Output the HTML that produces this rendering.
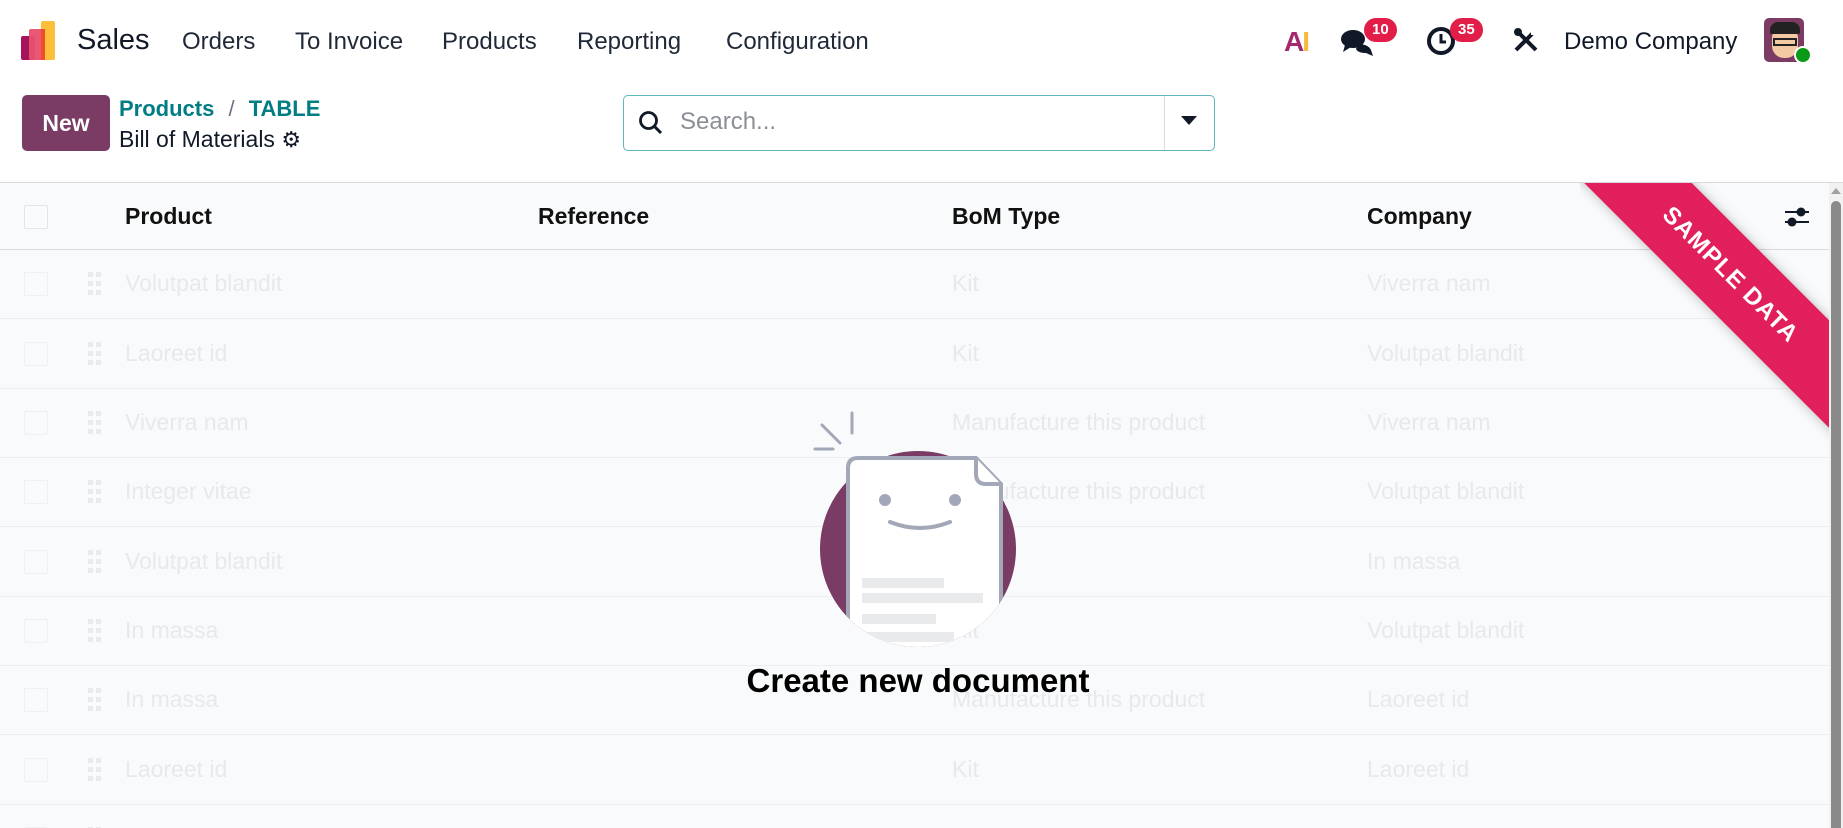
<!DOCTYPE html>
<html style="width:1843px;height:828px;overflow:hidden"><head><meta charset="utf-8">
<style>
*{box-sizing:border-box;margin:0;padding:0}
body{width:1843px;height:828px;overflow:hidden;background:#fff;font-family:"Liberation Sans","DejaVu Sans",sans-serif;color:#111827;position:relative}
.abs{position:absolute}
.nav{font-size:24px;color:#1f2937;top:28px;white-space:nowrap}
.badge{position:absolute;background:#e11d48;color:#fff;font-size:15px;font-weight:bold;border-radius:12px;padding:3px 8px;line-height:18px}
.th{position:absolute;top:203px;font-size:23px;font-weight:bold;color:#111}
.row{position:absolute;left:0;width:1829px;height:69px;border-bottom:1px solid #eceef1}
.cell{position:absolute;top:20px;font-size:23px;color:#e7e9ec;white-space:nowrap}
.cb{position:absolute;left:24px;top:22px;width:24px;height:24px;border:1px solid #eef0f2;border-radius:2px}
.dh{position:absolute;left:88px;top:22px;width:14px;height:24px;background:
linear-gradient(#e8eaed,#e8eaed) 0 0/5px 5px,linear-gradient(#e8eaed,#e8eaed) 8px 0/5px 5px,
linear-gradient(#e8eaed,#e8eaed) 0 9px/5px 5px,linear-gradient(#e8eaed,#e8eaed) 8px 9px/5px 5px,
linear-gradient(#e8eaed,#e8eaed) 0 18px/5px 5px,linear-gradient(#e8eaed,#e8eaed) 8px 18px/5px 5px;background-repeat:no-repeat}
</style></head><body>

<svg class="abs" style="left:21px;top:20px" width="42" height="42" viewBox="0 0 42 42">
<rect x="0" y="16" width="14" height="24" rx="2" fill="#a4135c"/>
<rect x="8" y="9" width="14" height="31" rx="2" fill="#e8506f" opacity=".95"/>
<rect x="20" y="1" width="14" height="39" rx="2" fill="#fbbf3c"/>
<rect x="20" y="9" width="4" height="31" fill="#f04c2b"/>
</svg>
<div class="abs nav" style="left:77px;top:24px;font-size:29px;color:#111827">Sales</div>
<div class="abs nav" style="left:182px">Orders</div>
<div class="abs nav" style="left:295px">To Invoice</div>
<div class="abs nav" style="left:442px">Products</div>
<div class="abs nav" style="left:577px">Reporting</div>
<div class="abs nav" style="left:726px">Configuration</div>

<div class="abs" style="left:1284px;top:26px;font-size:28px;font-weight:bold;letter-spacing:-2px"><span style="color:#a3286e">A</span><span style="color:#f6b93b">I</span></div>
<svg class="abs" style="left:1340px;top:28px" width="34" height="30" viewBox="0 0 34 30"><ellipse cx="13" cy="11" rx="12" ry="9" fill="#111827"/><path d="M5 17 L3 24 L11 19Z" fill="#111827"/><path d="M18 16 q10 0 13 6 l2 6 -7 -3 q-8 0 -10 -4" fill="#111827"/></svg>
<div class="badge" style="left:1364px;top:18px">10</div>
<svg class="abs" style="left:1426px;top:25px" width="32" height="32" viewBox="0 0 32 32"><circle cx="15" cy="16" r="12" fill="none" stroke="#111827" stroke-width="4"/><path d="M15 9v8h5" stroke="#111827" stroke-width="3" fill="none"/></svg>
<div class="badge" style="left:1450px;top:18px">35</div>
<svg class="abs" style="left:1512px;top:26px" width="28" height="28" viewBox="0 0 28 28"><path d="M4 4 L24 24" stroke="#111827" stroke-width="4"/><path d="M24 4 L4 24" stroke="#111827" stroke-width="4"/><circle cx="6" cy="6" r="4" fill="#111827"/><rect x="19" y="2" width="7" height="7" fill="#fff"/></svg>
<div class="abs nav" style="left:1564px;top:28px;color:#111827">Demo Company</div>
<div class="abs" style="left:1764px;top:18px;width:40px;height:44px;border-radius:5px;background:#7b3b63;overflow:hidden">
<div class="abs" style="left:8px;top:8px;width:26px;height:32px;border-radius:12px;background:#f2c9a3"></div>
<div class="abs" style="left:6px;top:4px;width:30px;height:12px;border-radius:8px 8px 2px 2px;background:#222"></div>
<div class="abs" style="left:9px;top:20px;width:24px;height:8px;border:2px solid #222"></div>
</div>
<div class="abs" style="left:1794px;top:46px;width:18px;height:18px;border-radius:50%;background:#0a9b16;border:2px solid #fff"></div>

<div class="abs" style="left:22px;top:95px;width:88px;height:56px;background:#7a3c65;border-radius:5px;color:#fff;font-size:23px;font-weight:bold;text-align:center;line-height:56px">New</div>
<div class="abs" style="left:119px;top:96px;font-size:22px;font-weight:bold;color:#017e84;white-space:nowrap">Products <span style="color:#6b7280;font-weight:normal;padding:0 8px">/</span> TABLE</div>
<div class="abs" style="left:119px;top:126px;font-size:23px;color:#111827;white-space:nowrap">Bill of Materials <span style="font-size:22px;font-weight:bold">&#9881;</span></div>

<div class="abs" style="left:623px;top:95px;width:592px;height:56px;border:1px solid #5fb7bb;border-radius:5px"></div>
<div class="abs" style="left:1164px;top:96px;width:1px;height:54px;background:#d8dadd"></div>
<svg class="abs" style="left:638px;top:110px" width="26" height="26" viewBox="0 0 26 26"><circle cx="10.5" cy="10.5" r="8" fill="none" stroke="#111827" stroke-width="2.8"/><path d="M16 16 L23 23" stroke="#111827" stroke-width="3"/></svg>
<div class="abs" style="left:680px;top:108px;font-size:24px;color:#8a8f96">Search...</div>
<svg class="abs" style="left:1181px;top:116px" width="16" height="10"><path d="M0 0H16L8 9Z" fill="#111827"/></svg>

<div class="abs" style="left:0;top:182px;width:1843px;height:646px;background:#f9fafb;border-top:1px solid #d8dadd"></div>
<div class="abs" style="left:0;top:249px;width:1829px;height:1px;background:#d8dadd"></div>
<div class="abs" style="left:24px;top:205px;width:24px;height:24px;border:1px solid #e3e5e8;border-radius:2px;background:#fafbfc"></div>
<div class="th" style="left:125px">Product</div>
<div class="th" style="left:538px">Reference</div>
<div class="th" style="left:952px">BoM Type</div>
<div class="th" style="left:1367px">Company</div>

<div class="row" style="top:250px"><div class="cb"></div><div class="dh"></div><div class="cell" style="left:125px">Volutpat blandit</div><div class="cell" style="left:952px">Kit</div><div class="cell" style="left:1367px">Viverra nam</div></div>
<div class="row" style="top:320px"><div class="cb"></div><div class="dh"></div><div class="cell" style="left:125px">Laoreet id</div><div class="cell" style="left:952px">Kit</div><div class="cell" style="left:1367px">Volutpat blandit</div></div>
<div class="row" style="top:389px"><div class="cb"></div><div class="dh"></div><div class="cell" style="left:125px">Viverra nam</div><div class="cell" style="left:952px">Manufacture this product</div><div class="cell" style="left:1367px">Viverra nam</div></div>
<div class="row" style="top:458px"><div class="cb"></div><div class="dh"></div><div class="cell" style="left:125px">Integer vitae</div><div class="cell" style="left:952px">Manufacture this product</div><div class="cell" style="left:1367px">Volutpat blandit</div></div>
<div class="row" style="top:528px"><div class="cb"></div><div class="dh"></div><div class="cell" style="left:125px">Volutpat blandit</div><div class="cell" style="left:952px">Kit</div><div class="cell" style="left:1367px">In massa</div></div>
<div class="row" style="top:597px"><div class="cb"></div><div class="dh"></div><div class="cell" style="left:125px">In massa</div><div class="cell" style="left:952px">Kit</div><div class="cell" style="left:1367px">Volutpat blandit</div></div>
<div class="row" style="top:666px"><div class="cb"></div><div class="dh"></div><div class="cell" style="left:125px">In massa</div><div class="cell" style="left:952px">Manufacture this product</div><div class="cell" style="left:1367px">Laoreet id</div></div>
<div class="row" style="top:736px"><div class="cb"></div><div class="dh"></div><div class="cell" style="left:125px">Laoreet id</div><div class="cell" style="left:952px">Kit</div><div class="cell" style="left:1367px">Laoreet id</div></div>
<div class="row" style="top:805px;height:23px;border:none;overflow:hidden"><div class="cb"></div><div class="dh"></div></div>

<svg class="abs" style="left:1784px;top:206px" width="26" height="22" viewBox="0 0 26 22"><path d="M1 6H25M1 16H25" stroke="#111827" stroke-width="2"/><circle cx="17" cy="6" r="4.5" fill="#111827"/><circle cx="8" cy="16" r="4.5" fill="#111827"/></svg>

<div class="abs" style="left:1580px;top:183px;width:250px;height:260px;overflow:hidden">
<div class="abs" style="left:-100px;top:54px;width:500px;height:76px;background:#e11f5a;transform:rotate(45deg);color:#fff;font-size:24px;font-weight:bold;text-align:center;line-height:76px;letter-spacing:1px;box-shadow:0 0 12px rgba(0,0,0,.25)">SAMPLE DATA</div>
</div>

<div class="abs" style="left:1829px;top:183px;width:14px;height:645px;background:#f1f1f1"></div>
<svg class="abs" style="left:1831px;top:188px" width="10" height="6"><path d="M0 6L5 0L10 6Z" fill="#a0a0a0"/></svg>
<div class="abs" style="left:1831px;top:201px;width:10px;height:627px;border-radius:5px 5px 0 0;background:#8a8a8a"></div>

<svg class="abs" style="left:810px;top:405px" width="220" height="250" viewBox="0 0 220 250">
<defs><clipPath id="c"><circle cx="108" cy="144" r="98"/><rect x="0" y="0" width="220" height="144"/></clipPath></defs>
<circle cx="108" cy="144" r="98" fill="#7a3c65"/>
<g clip-path="url(#c)">
<path d="M38 63 q0-10 10-10 h118 l25 26 v180 h-153z" fill="#fff" stroke="#a2a8b8" stroke-width="4"/>
<path d="M166 53 v16 q0 10 10 10 h15" fill="#fff" stroke="#a2a8b8" stroke-width="4"/>
<rect x="52" y="173" width="82" height="10" fill="#e9eaec"/>
<rect x="52" y="188" width="121" height="10" fill="#e9eaec"/>
<rect x="52" y="209" width="74" height="10" fill="#e9eaec"/>
<rect x="52" y="227" width="92" height="10" fill="#e9eaec"/>
</g>
<circle cx="75" cy="95" r="6" fill="#a2a8b8"/><circle cx="145" cy="95" r="6" fill="#a2a8b8"/>
<path d="M80 117 q30 12 60 0" fill="none" stroke="#a2a8b8" stroke-width="4" stroke-linecap="round"/>
<path d="M12 20 l18 18 M42 8 v20 M5 44 h18" stroke="#a2a8b8" stroke-width="3" stroke-linecap="round"/>
</svg>
<div class="abs" style="left:618px;top:662px;width:600px;text-align:center;font-size:33px;font-weight:bold;color:#000">Create new document</div>

</body></html>
